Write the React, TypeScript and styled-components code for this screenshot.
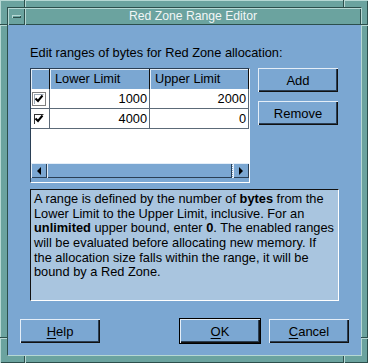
import styled, { createGlobalStyle, css } from 'styled-components';

const TEAL = '#6ba39f';
const TEAL_LIGHT = '#b6d8d4';
const TEAL_DARK = '#2c4f4c';
const BLUE = '#7ba7d2';
const BLUE_LIGHT = '#e4eef8';
const BLUE_DARK = '#2a3f55';
const NOTE_BG = '#a9c5df';

const GlobalStyle = createGlobalStyle`
  html, body {
    margin: 0;
    padding: 0;
    background: ${TEAL};
  }
  body {
    font-family: 'Liberation Sans', Arial, sans-serif;
    font-size: 12.8px;
    color: #000;
  }
`;

const raised = (light: string, dark: string) => css`
  box-shadow: inset 1px 1px 0 ${light}, inset -1px -1px 0 ${dark};
`;

const Window = styled.div`
  position: relative;
  width: 368px;
  height: 363px;
  box-sizing: border-box;
  padding: 7px 6px 7px 7px;
  display: flex;
  background: ${TEAL};
  ${raised(TEAL_LIGHT, TEAL_DARK)}
`;

const Notch = styled.div<{ $side: 'top' | 'bottom' | 'left' | 'right'; $at: number }>`
  position: absolute;
  ${({ $side, $at }) =>
    $side === 'top' || $side === 'bottom'
      ? css`
          left: ${$at}px;
          ${$side}: 0;
          width: 0;
          height: 7px;
          border-left: 1px solid ${TEAL_DARK};
          border-right: 1px solid ${TEAL_LIGHT};
        `
      : css`
          top: ${$at}px;
          ${$side}: 0;
          width: 7px;
          height: 0;
          border-top: 1px solid ${TEAL_DARK};
          border-bottom: 1px solid ${TEAL_LIGHT};
        `}
`;

const Inner = styled.div`
  flex: 1;
  display: flex;
  flex-direction: column;
  border: 1px solid;
  border-color: ${TEAL_DARK} ${TEAL_LIGHT} ${TEAL_LIGHT} ${TEAL_DARK};
`;

const TitleBar = styled.div`
  height: 17px;
  display: flex;
`;

const MenuButton = styled.div`
  width: 17px;
  display: flex;
  align-items: center;
  justify-content: center;
  ${raised(TEAL_LIGHT, TEAL_DARK)}
`;

const MenuGlyph = styled.div`
  width: 9px;
  height: 3px;
  margin-right: 1px;
  ${raised(TEAL_LIGHT, TEAL_DARK)}
`;

const Title = styled.div`
  flex: 1;
  text-align: center;
  font-size: 12.2px;
  line-height: 17px;
  color: #f2f6f6;
  ${raised(TEAL_LIGHT, TEAL_DARK)}
`;

const Client = styled.div`
  flex: 1;
  display: flex;
  flex-direction: column;
  background: ${BLUE};
`;

const Lead = styled.div`
  margin: 21px 0 0 22px;
  line-height: 14px;
`;

const Body = styled.div`
  display: flex;
  gap: 8px;
  margin: 8px 0 0 22px;
`;

const Table = styled.div`
  width: 220px;
  height: 115px;
  box-sizing: border-box;
  display: flex;
  flex-direction: column;
  border: 1px solid;
  border-color: ${BLUE_DARK} #fff #fff ${BLUE_DARK};
  padding-bottom: 4px;
`;

const Grid = styled.div`
  display: grid;
  grid-template-columns: 19px 100px 99px;
  grid-auto-rows: 20px;
  background: #fff;
`;

const HeadCell = styled.div`
  height: 21px;
  box-sizing: border-box;
  padding-left: 5px;
  line-height: 20px;
  background: ${BLUE};
  border-right: 1px solid #111;
  border-bottom: 1px solid #111;
  box-shadow: inset 1px 1px 0 ${BLUE_LIGHT};
`;

const Cell = styled.div<{ $check?: boolean }>`
  box-sizing: border-box;
  padding-right: 2px;
  line-height: 19px;
  text-align: right;
  background: #fff;
  border-right: 1px solid #5c6a78;
  border-bottom: 1px solid #5c6a78;
  ${({ $check }) =>
    $check &&
    css`
      display: flex;
      align-items: center;
      padding: 0 0 0 1px;
    `}
`;

const Blank = styled.div`
  flex: 1;
  background: #fff;
`;

const Scrollbar = styled.div`
  height: 15px;
  display: flex;
  background: ${BLUE};
`;

const Arrow = styled.div<{ $dir: 'left' | 'right' }>`
  width: 16px;
  display: flex;
  align-items: center;
  justify-content: center;
  ${raised(BLUE_LIGHT, BLUE_DARK)}
  &::before {
    content: '';
    border-top: 4px solid transparent;
    border-bottom: 4px solid transparent;
    ${({ $dir }) => ($dir === 'left' ? 'border-right: 4px solid #000;' : 'border-left: 4px solid #000;')}
  }
`;

const Thumb = styled.div`
  flex: 1;
  border-right: 1px dotted #fff;
  ${raised(BLUE_LIGHT, BLUE_DARK)}
`;

const Side = styled.div`
  display: flex;
  flex-direction: column;
  gap: 9px;
`;

const Button = styled.div<{ $default?: boolean }>`
  width: 80px;
  height: 24px;
  box-sizing: border-box;
  display: flex;
  align-items: center;
  justify-content: center;
  background: ${BLUE};
  font-size: 13px;
  box-shadow: inset 1px 1px 0 ${BLUE_LIGHT}, inset -1px -1px 0 #111, inset -2px -2px 0 ${BLUE_DARK};
  ${({ $default }) =>
    $default &&
    css`
      width: 82px;
      height: 26px;
      border: 1px solid #000;
    `}
  u {
    text-decoration-thickness: 1px;
    text-underline-offset: 2px;
  }
`;

const Note = styled.div`
  width: 309px;
  height: 112px;
  box-sizing: border-box;
  margin: 6px 0 0 22px;
  padding: 2px 3px 0;
  background: ${NOTE_BG};
  line-height: 14.67px;
  border: 1px solid;
  border-color: #111 #fff #fff #111;
`;

const Footer = styled.div`
  margin-top: auto;
  height: 26px;
  padding: 0 12px 11px;
  display: flex;
  align-items: center;
  gap: 8px;
`;

const Spacer = styled.div`
  flex: 1;
`;

const Check = ({ focused }: { focused?: boolean }) => (
  <svg width="14" height="14" viewBox="0 0 14 14">
    {focused && <rect x="0.5" y="0.5" width="13" height="13" fill="none" stroke="#000" strokeDasharray="1 1" />}
    <rect x="2" y="2" width="10" height="10" fill="#fff" />
    <path d="M2 2.5H11.5M2.5 2V12" stroke={focused ? '#9aa8b6' : '#333'} />
    <path d="M3.5 6.5L6 9L10.5 3.5" stroke="#000" strokeWidth="2" fill="none" />
  </svg>
);

const rows = [
  { lower: 1000, upper: 2000, focused: true },
  { lower: 4000, upper: 0, focused: false },
];

export default function App() {
  return (
    <>
      <GlobalStyle />
      <Window>
        <Notch $side="top" $at={24} />
        <Notch $side="top" $at={343} />
        <Notch $side="bottom" $at={24} />
        <Notch $side="bottom" $at={343} />
        <Notch $side="left" $at={24} />
        <Notch $side="left" $at={337} />
        <Notch $side="right" $at={24} />
        <Notch $side="right" $at={337} />
        <Inner>
          <TitleBar>
            <MenuButton>
              <MenuGlyph />
            </MenuButton>
            <Title>Red Zone Range Editor</Title>
          </TitleBar>
          <Client>
            <Lead>Edit ranges of bytes for Red Zone allocation:</Lead>
            <Body>
              <Table>
                <Grid>
                  <HeadCell />
                  <HeadCell>Lower Limit</HeadCell>
                  <HeadCell>Upper Limit</HeadCell>
                  {rows.map((r) => (
                    <>
                      <Cell $check key={`c${r.lower}`}>
                        <Check focused={r.focused} />
                      </Cell>
                      <Cell key={`l${r.lower}`}>{r.lower}</Cell>
                      <Cell key={`u${r.lower}`}>{r.upper}</Cell>
                    </>
                  ))}
                </Grid>
                <Blank />
                <Scrollbar>
                  <Arrow $dir="left" />
                  <Thumb />
                  <Arrow $dir="right" />
                </Scrollbar>
              </Table>
              <Side>
                <Button>Add</Button>
                <Button>Remove</Button>
              </Side>
            </Body>
            <Note>
              A range is defined by the number of <b>bytes</b> from the Lower Limit to the Upper Limit,
              inclusive. For an <b>unlimited</b> upper bound, enter <b>0</b>. The enabled ranges will be
              evaluated before allocating new memory. If the allocation size falls within the range, it
              will be bound by a Red Zone.
            </Note>
            <Footer>
              <Button>
                <u>H</u>elp
              </Button>
              <Spacer />
              <Button $default>
                <u>O</u>K
              </Button>
              <Button>
                <u>C</u>ancel
              </Button>
            </Footer>
          </Client>
        </Inner>
      </Window>
    </>
  );
}
